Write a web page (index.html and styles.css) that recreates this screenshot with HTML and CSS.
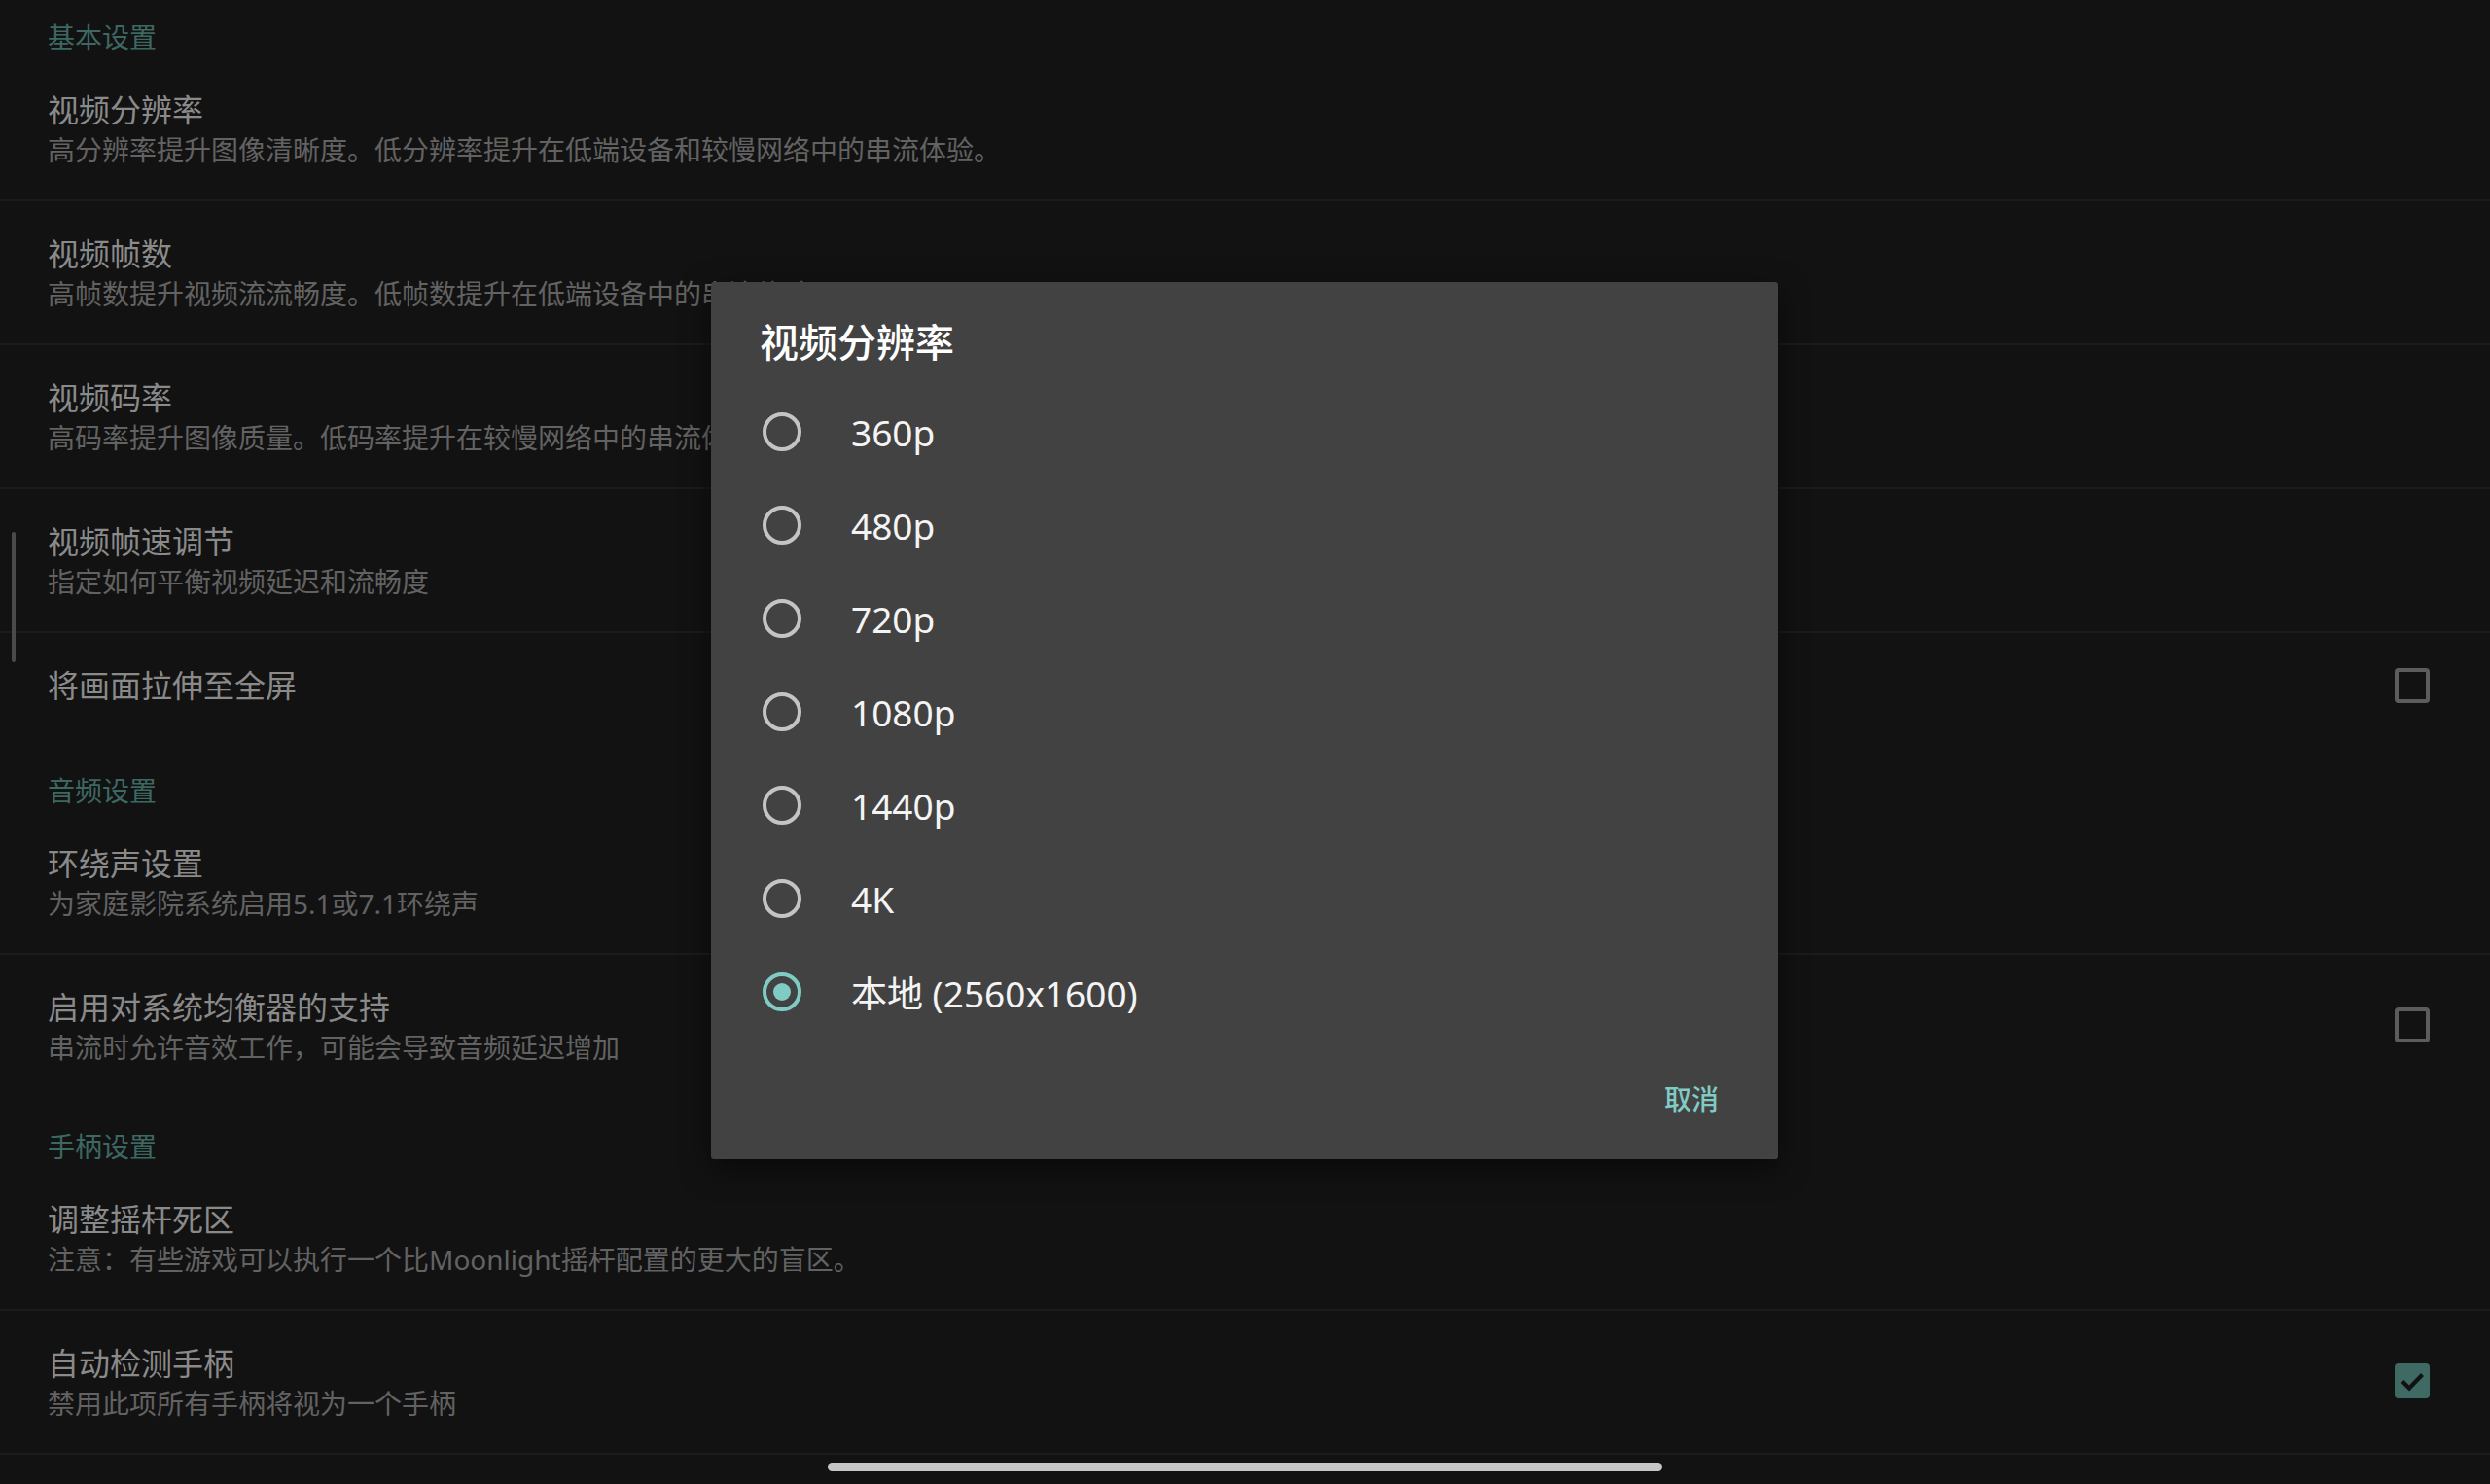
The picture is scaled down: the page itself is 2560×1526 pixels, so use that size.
FILE: index.html
```html
<!DOCTYPE html>
<html lang="zh-CN">
<head>
<meta charset="utf-8">
<title>设置</title>
<link rel="stylesheet" href="styles.css">
</head>
<body>
<div class="screen">
  <div class="prefs">
    <div class="cat first">基本设置</div>
    <div class="pref divided">
      <div class="pref-text">
        <div class="pref-title">视频分辨率</div>
        <div class="pref-sum">高分辨率提升图像清晰度。低分辨率提升在低端设备和较慢网络中的串流体验。</div>
      </div>
    </div>
    <div class="pref divided">
      <div class="pref-text">
        <div class="pref-title">视频帧数</div>
        <div class="pref-sum">高帧数提升视频流流畅度。低帧数提升在低端设备中的串流体验。</div>
      </div>
    </div>
    <div class="pref divided">
      <div class="pref-text">
        <div class="pref-title">视频码率</div>
        <div class="pref-sum">高码率提升图像质量。低码率提升在较慢网络中的串流体验。</div>
      </div>
    </div>
    <div class="pref divided">
      <div class="pref-text">
        <div class="pref-title">视频帧速调节</div>
        <div class="pref-sum">指定如何平衡视频延迟和流畅度</div>
      </div>
    </div>
    <div class="pref">
      <div class="pref-text">
        <div class="pref-title">将画面拉伸至全屏</div>
      </div>
      <span class="cb"></span>
    </div>

    <div class="cat">音频设置</div>
    <div class="pref divided">
      <div class="pref-text">
        <div class="pref-title">环绕声设置</div>
        <div class="pref-sum">为家庭影院系统启用5.1或7.1环绕声</div>
      </div>
    </div>
    <div class="pref tall">
      <div class="pref-text">
        <div class="pref-title">启用对系统均衡器的支持</div>
        <div class="pref-sum">串流时允许音效工作，可能会导致音频延迟增加</div>
      </div>
      <span class="cb"></span>
    </div>

    <div class="cat">手柄设置</div>
    <div class="pref divided">
      <div class="pref-text">
        <div class="pref-title">调整摇杆死区</div>
        <div class="pref-sum">注意：有些游戏可以执行一个比Moonlight摇杆配置的更大的盲区。</div>
      </div>
    </div>
    <div class="pref divided">
      <div class="pref-text">
        <div class="pref-title">自动检测手柄</div>
        <div class="pref-sum">禁用此项所有手柄将视为一个手柄</div>
      </div>
      <span class="cb checked">
        <svg viewBox="0 0 36 36" width="36" height="36"><path d="M8 18.5 L15 25.5 L28.5 11.5" fill="none" stroke="#121212" stroke-width="4.2"/></svg>
      </span>
    </div>
  </div>

  <div class="scrollbar"></div>

  <div class="dialog">
    <div class="dlg-title">视频分辨率</div>
    <div class="dlg-list">
      <div class="opt"><span class="radio"></span><span class="opt-label">360p</span></div>
      <div class="opt"><span class="radio"></span><span class="opt-label">480p</span></div>
      <div class="opt"><span class="radio"></span><span class="opt-label">720p</span></div>
      <div class="opt"><span class="radio"></span><span class="opt-label">1080p</span></div>
      <div class="opt"><span class="radio"></span><span class="opt-label">1440p</span></div>
      <div class="opt"><span class="radio"></span><span class="opt-label">4K</span></div>
      <div class="opt"><span class="radio on"></span><span class="opt-label">本地 (2560x1600)</span></div>
    </div>
    <div class="dlg-actions">
      <span class="btn">取消</span>
    </div>
  </div>

  <div class="navhandle"></div>
</div>
</body>
</html>
```

FILE: styles.css
```css
html, body {
  margin: 0;
  padding: 0;
  background: #121212;
}

body {
  font-family: "Noto Sans", "Noto Sans CJK SC", sans-serif;
  width: 2560px;
  height: 1526px;
  overflow: hidden;
}

.screen {
  position: relative;
  width: 2560px;
  height: 1526px;
  background: #121212;
  overflow: hidden;
}

.prefs {
  display: flex;
  flex-direction: column;
}

.cat {
  padding: 36px 48px 5px 49px;
  height: 32px;
  line-height: 32px;
  font-size: 28px;
  color: #3d6862;
}

.cat.first {
  padding-top: 22px;
}

.pref {
  display: flex;
  align-items: center;
  padding: 31px 62px 33px 49px;
}

.pref.tall {
  padding-bottom: 32px;
}

.pref.divided {
  border-bottom: 2px solid #1b1b1b;
  padding-bottom: 33px;
}

.pref-text {
  flex: 1;
  display: flex;
  flex-direction: column;
}

.pref-title {
  font-size: 32px;
  line-height: 46px;
  color: #8a8a8a;
}

.pref-sum {
  font-size: 28px;
  line-height: 36px;
  color: #626262;
}

.cb {
  width: 36px;
  height: 36px;
  box-sizing: border-box;
  border: 4px solid #5c5c5c;
  border-radius: 4px;
  flex: none;
  display: flex;
  align-items: center;
  justify-content: center;
}

.cb.checked {
  border: none;
  background: #3f6a64;
}

.cb svg {
  display: block;
}

.scrollbar {
  position: absolute;
  left: 12px;
  top: 547px;
  width: 4px;
  height: 134px;
  background: #4a4a4a;
  border-radius: 2px;
}

.dialog {
  position: absolute;
  left: 731px;
  top: 290px;
  width: 1097px;
  height: 902px;
  box-sizing: border-box;
  background: #424242;
  border-radius: 3px;
  display: flex;
  flex-direction: column;
  padding-top: 38px;
  box-shadow: 0 10px 30px rgba(0, 0, 0, 0.5);
}

.dlg-title {
  padding: 0 48px 0 50px;
  font-size: 40px;
  line-height: 48px;
  color: #ffffff;
  font-weight: 500;
}

.dlg-list {
  margin-top: 20px;
  display: flex;
  flex-direction: column;
}

.opt {
  height: 96px;
  display: flex;
  align-items: center;
  padding-left: 53px;
}

.radio {
  width: 40px;
  height: 40px;
  box-sizing: border-box;
  border: 4px solid #c4c4c4;
  border-radius: 50%;
  flex: none;
  display: flex;
  align-items: center;
  justify-content: center;
}

.radio.on {
  border-color: #80cbc4;
}

.radio.on::after {
  content: "";
  width: 18px;
  height: 18px;
  border-radius: 50%;
  background: #80cbc4;
}

.opt-label {
  margin-left: 51px;
  font-size: 37px;
  color: #f4f4f4;
}

.dlg-actions {
  display: flex;
  justify-content: flex-end;
  margin-top: 26px;
  padding-right: 61px;
}

.btn {
  height: 72px;
  line-height: 72px;
  font-size: 28px;
  color: #80cbc4;
  font-weight: 500;
}

.navhandle {
  position: absolute;
  left: 851px;
  top: 1504px;
  width: 858px;
  height: 9px;
  border-radius: 5px;
  background: #c6c6c6;
}
```
